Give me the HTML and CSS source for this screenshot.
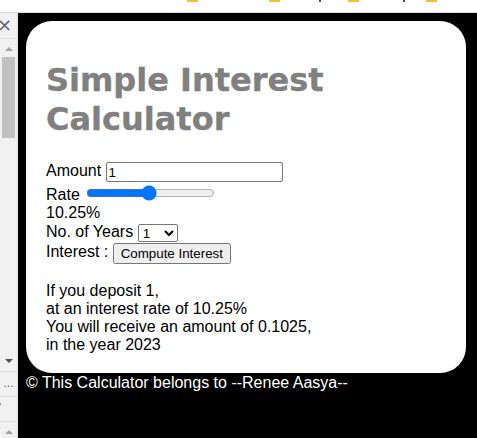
FILE: index.html
```html
<!DOCTYPE html>
<html>
<head>
<meta charset="utf-8">
<link rel="stylesheet" href="styles.css">
</head>
<body>
<div class="topbar">
  <span class="mark m1"></span><span class="mark m2"></span><span class="tick t1"></span><span class="mark m3"></span><span class="tick t2"></span><span class="mark m4"></span>
</div>
<div class="frame">
  <aside class="side">
    <div class="close">×</div>
    <div class="scroll">
      <div class="arrow up"></div>
      <div class="thumb"></div>
      <div class="spacer"></div>
      <div class="arrow down"></div>
    </div>
    <div class="cell">...</div>
    <div class="cell slash">/</div>
    <div class="cell"><div class="arrow up"></div></div>
  </aside>
  <main class="page">
    <div class="card">
      <h1 class="title">Simple Interest Calculator</h1>
      <div class="form">
        <div class="row row-amount">Amount <input class="amount" type="text" value="1"></div>
        <div class="row row-rate">Rate <input class="range" type="range" min="1" max="20" step="0.25" value="10.25"></div>
        <div class="row row-pct">10.25%</div>
        <div class="row row-years">No. of Years <select class="years"><option>1</option></select></div>
        <div class="row row-interest">Interest : <button class="btn">Compute Interest</button></div>
        <div class="result">
          If you deposit 1,<br>
          at an interest rate of 10.25%<br>
          You will receive an amount of 0.1025,<br>
          in the year 2023
        </div>
      </div>
    </div>
    <div class="footer">© This Calculator belongs to --Renee Aasya--</div>
  </main>
</div>
</body>
</html>
```
FILE: styles.css
```css
html, body {
  margin: 0;
  padding: 0;
  height: 100%;
  overflow: hidden;
}
body {
  font-family: "Liberation Sans", Arial, sans-serif;
  font-size: 16px;
  background: #fff;
  display: flex;
  flex-direction: column;
}
.topbar {
  height: 12px;
  flex: none;
  border-bottom: 1px solid #dadce0;
  background: #fff;
  display: flex;
  align-items: flex-start;
}
.mark {
  display: block;
  height: 2px;
  width: 11px;
  background: #f2c233;
}
.tick {
  display: block;
  height: 2px;
  width: 2px;
  background: #4a4a6a;
}
.m1 { margin-left: 187px; }
.m2 { margin-left: 71px; }
.t1 { margin-left: 39px; }
.m3 { margin-left: 27px; }
.t2 { margin-left: 44px; }
.m4 { margin-left: 21px; }
.frame {
  flex: 1;
  display: flex;
  min-height: 0;
}
.side {
  width: 17px;
  flex: none;
  background: #f1f1f1;
  border-right: 1px solid #e3e3e3;
  display: flex;
  flex-direction: column;
  color: #5f6368;
}
.side > * {
  flex: none;
}
.close {
  height: 25px;
  line-height: 24px;
  font-size: 18px;
  text-align: left;
  margin-left: -3px;
  border-bottom: 1px solid #dadce0;
  font-family: "DejaVu Sans", sans-serif;
}
.scroll {
  height: 332px;
  display: flex;
  flex-direction: column;
  align-items: center;
  border-bottom: 1px solid #dadce0;
}
.arrow {
  width: 0;
  height: 0;
  border-left: 4px solid transparent;
  border-right: 4px solid transparent;
}
.arrow.up {
  border-bottom: 4px solid #a3a3a3;
  margin-top: 8px;
}
.arrow.down {
  border-top: 4px solid #505050;
  margin-bottom: 8px;
}
.thumb {
  width: 13px;
  height: 81px;
  margin-top: 6px;
  background: #c1c1c1;
}
.spacer { flex: 1; }
.cell {
  height: 24px;
  border-bottom: 1px solid #dadce0;
  font-size: 12px;
  line-height: 22px;
  display: flex;
  justify-content: center;
  color: #5f6368;
}
.cell.slash {
  justify-content: flex-start;
  font-style: italic;
  margin-left: -3px;
  color: #888;
}
.page {
  flex: 1;
  background: #000;
  padding: 8px;
  min-width: 0;
}
.card {
  width: 440px;
  box-sizing: border-box;
  background: #fff;
  border-radius: 26px;
  padding: 20px 20px 19px 20px;
  color: #000;
}
.title {
  font-family: Verdana, "DejaVu Sans", sans-serif;
  font-weight: bold;
  font-size: 32px;
  line-height: 39px;
  color: #808080;
  -webkit-text-stroke: 0.35px #808080;
  margin: 20px 0 23px 0;
  width: 300px;
}
.row {
  line-height: 18px;
  white-space: nowrap;
}
.row-amount { height: 24px; }
.row-rate { height: 18px; }
.row-pct { height: 19px; }
.row-years { height: 20px; }
.row-interest { height: 20px; }
.amount {
  vertical-align: top;
  width: 177px;
  height: 20px;
  box-sizing: border-box;
  font-family: "Liberation Sans", Arial, sans-serif;
  font-size: 13.33px;
  padding: 1px 2px;
  border: 1px solid #767676;
  border-radius: 2px;
  margin: 0;
}
.range {
  vertical-align: top;
  height: 16px;
  margin: -1px 2px 0 2px;
}
.years {
  vertical-align: top;
  width: 40px;
  height: 18px;
  box-sizing: border-box;
  font-family: "Liberation Sans", Arial, sans-serif;
  font-size: 13.33px;
  margin: 1px 0 0 0;
}
.btn {
  vertical-align: top;
  font-family: "Liberation Sans", Arial, sans-serif;
  font-size: 13.33px;
  margin: 0;
}
.result {
  margin-top: 19px;
  line-height: 18px;
}
.footer {
  color: #fff;
  line-height: 20px;
}
```
